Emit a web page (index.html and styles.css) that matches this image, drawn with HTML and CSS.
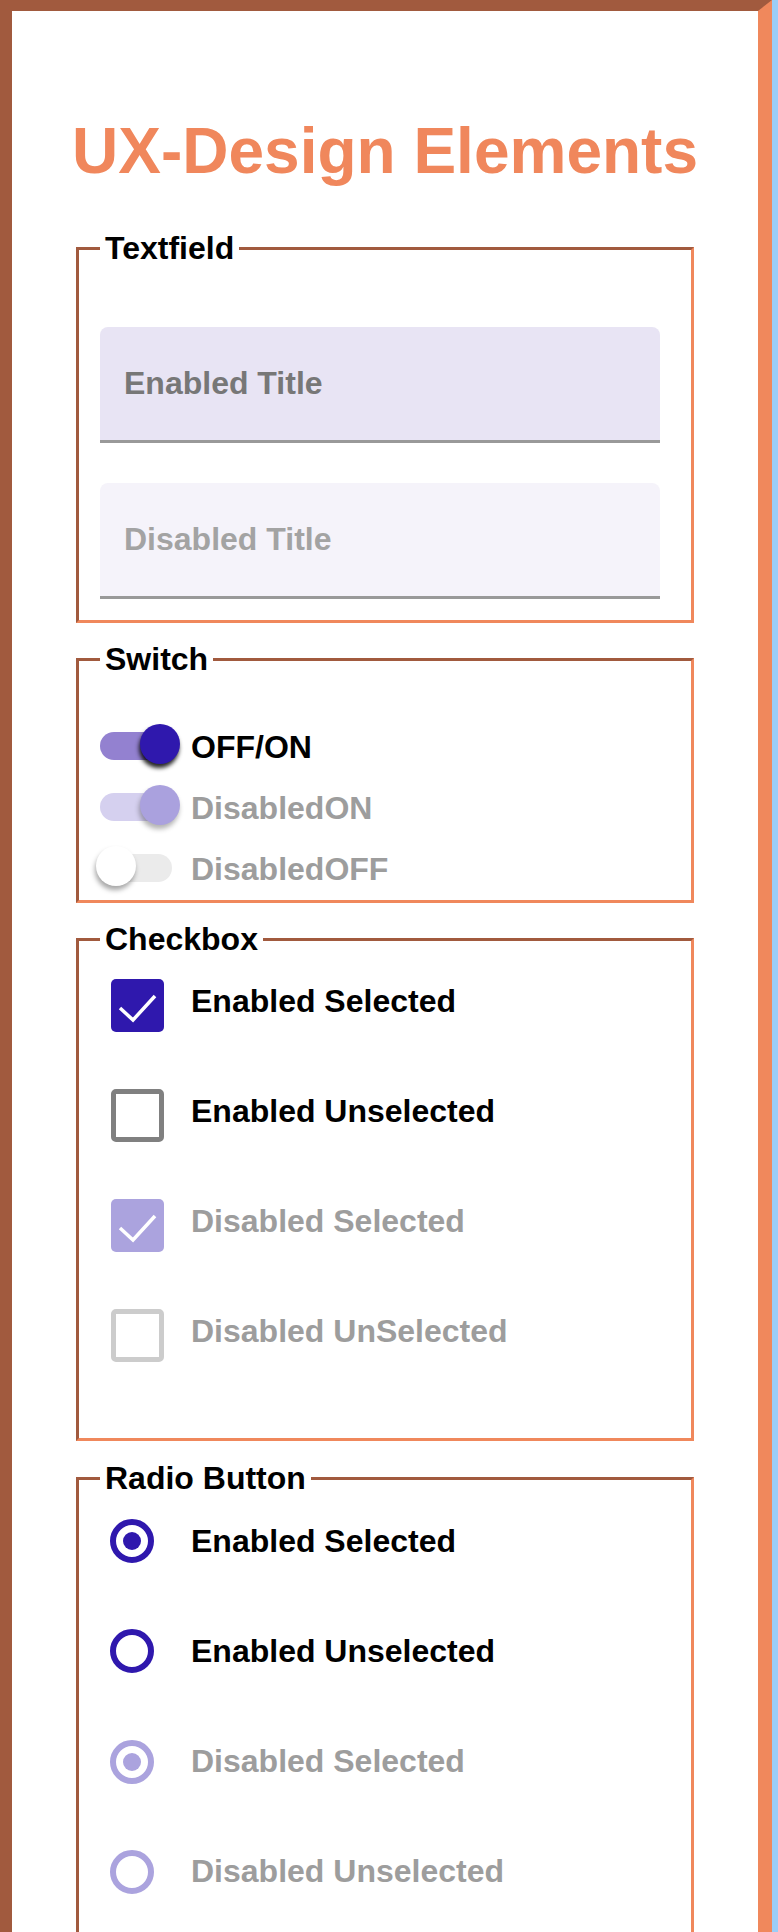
FILE: index.html
```html
<!DOCTYPE html>
<html lang="en">
<head>
<meta charset="utf-8">
<title>UX-Design Elements</title>
<link rel="stylesheet" href="styles.css">
</head>
<body>
<div class="page">
  <h1 class="title">UX-Design Elements</h1>

  <fieldset class="group group-text">
    <legend class="group-legend">Textfield</legend>
    <div class="field field-enabled">Enabled Title</div>
    <div class="field field-disabled">Disabled Title</div>
  </fieldset>

  <fieldset class="group group-switch">
    <legend class="group-legend">Switch</legend>
    <div class="switch-row">
      <span class="switch switch-on"><span class="track"></span><span class="thumb"></span></span>
      <span class="label">OFF/ON</span>
    </div>
    <div class="switch-row">
      <span class="switch switch-dis-on"><span class="track"></span><span class="thumb"></span></span>
      <span class="label label-dis">DisabledON</span>
    </div>
    <div class="switch-row">
      <span class="switch switch-dis-off"><span class="track"></span><span class="thumb"></span></span>
      <span class="label label-dis">DisabledOFF</span>
    </div>
  </fieldset>

  <fieldset class="group group-check">
    <legend class="group-legend">Checkbox</legend>
    <div class="check-row">
      <span class="box box-on"><svg viewBox="0 0 53 53" class="tick"><polyline points="9,29 22,41 44,17"/></svg></span>
      <span class="label">Enabled Selected</span>
    </div>
    <div class="check-row">
      <span class="box box-off"></span>
      <span class="label">Enabled Unselected</span>
    </div>
    <div class="check-row">
      <span class="box box-dis-on"><svg viewBox="0 0 53 53" class="tick"><polyline points="9,29 22,41 44,17"/></svg></span>
      <span class="label label-dis">Disabled Selected</span>
    </div>
    <div class="check-row">
      <span class="box box-dis-off"></span>
      <span class="label label-dis">Disabled UnSelected</span>
    </div>
  </fieldset>

  <fieldset class="group group-radio">
    <legend class="group-legend">Radio Button</legend>
    <div class="radio-row">
      <span class="radio radio-on"><span class="dot"></span></span>
      <span class="label">Enabled Selected</span>
    </div>
    <div class="radio-row">
      <span class="radio"></span>
      <span class="label">Enabled Unselected</span>
    </div>
    <div class="radio-row">
      <span class="radio radio-dis radio-on"><span class="dot"></span></span>
      <span class="label label-dis">Disabled Selected</span>
    </div>
    <div class="radio-row">
      <span class="radio radio-dis"></span>
      <span class="label label-dis">Disabled Unselected</span>
    </div>
  </fieldset>
</div>
</body>
</html>
```

FILE: styles.css
```css
html, body {
  margin: 0;
  padding: 0;
}

body {
  background: #9bcdf7;
  font-family: "Liberation Sans", Arial, Helvetica, sans-serif;
}

.page {
  box-sizing: border-box;
  width: 772px;
  min-height: 2100px;
  background: #ffffff;
  border-style: solid;
  border-width: 11px 14px 0 12px;
  border-color: #a15a3e #f0885c #f0885c #a15a3e;
  padding-bottom: 60px;
}

.title {
  margin: 103px 0 42px;
  font-size: 64px;
  font-weight: 700;
  line-height: normal;
  color: #f0875c;
  text-align: center;
}

.group {
  box-sizing: border-box;
  width: 618px;
  margin: 0 auto;
  border-style: solid;
  border-width: 3px;
  border-color: #a15a3e #f0885c #f0885c #a15a3e;
  padding: 0 31px 0 21px;
  min-width: 0;
}

.group-legend {
  padding: 0 5px;
  font-size: 32px;
  font-weight: 700;
  line-height: normal;
  color: #000;
}

.label {
  font-size: 32px;
  font-weight: 700;
  line-height: normal;
  color: #000;
  white-space: nowrap;
}

.label-dis {
  color: #9d9d9d;
}

/* Textfield */
.group-text {
  padding-top: 60px;
  padding-bottom: 21px;
}

.field {
  box-sizing: border-box;
  width: 560px;
  height: 116px;
  display: flex;
  align-items: center;
  padding-left: 24px;
  border-radius: 8px 8px 0 0;
  border-bottom: 3px solid #999999;
  font-size: 32px;
  font-weight: 700;
}

.field-enabled {
  background: #e8e4f4;
  color: #777777;
}

.field-disabled {
  margin-top: 40px;
  background: #f5f3fa;
  color: #a3a3a3;
}

/* Switch */
.group-switch {
  margin-top: 18px;
  padding-top: 39px;
  padding-bottom: 0;
}

.switch-row {
  height: 61px;
  display: flex;
  align-items: center;
}

.switch {
  display: grid;
  width: 84px;
  height: 44px;
  margin: 0 11px 4px -4px;
}

.track,
.thumb {
  grid-area: 1 / 1;
}

.track {
  width: 72px;
  height: 28px;
  margin-left: 4px;
  border-radius: 14px;
  align-self: center;
}

.thumb {
  width: 40px;
  height: 40px;
  border-radius: 50%;
  align-self: start;
}

.switch-on .track { background: #9381d0; }
.switch-on .thumb {
  justify-self: end;
  background: #2f18ad;
  box-shadow: -1px 4px 4px rgba(0, 0, 0, 0.85);
}

.switch-dis-on .track { background: #d5d0ef; }
.switch-dis-on .thumb {
  justify-self: end;
  background: #aaa1de;
  box-shadow: -1px 4px 5px rgba(0, 0, 0, 0.3);
}

.switch-dis-off .track { background: #ebebeb; }
.switch-dis-off .thumb {
  justify-self: start;
  background: #ffffff;
  box-shadow: -1px 4px 5px rgba(0, 0, 0, 0.35);
}

/* Checkbox */
.group-check {
  margin-top: 18px;
  padding-top: 21px;
  padding-bottom: 76px;
}

.check-row {
  display: flex;
  align-items: flex-start;
  height: 53px;
}

.check-row + .check-row {
  margin-top: 57px;
}

.check-row .label {
  margin-top: 4px;
}

.box {
  box-sizing: border-box;
  flex: none;
  width: 53px;
  height: 53px;
  margin: 0 27px 0 11px;
  border-radius: 5px;
  display: flex;
}

.box-on { background: #2f18ad; }
.box-dis-on { background: #aba3de; }
.box-off { border: 5px solid #808080; }
.box-dis-off { border: 5px solid #cccccc; }

.tick {
  width: 53px;
  height: 53px;
}

.tick polyline {
  fill: none;
  stroke: #ffffff;
  stroke-width: 3.5;
}

/* Radio */
.group-radio {
  margin-top: 19px;
  padding-top: 22px;
  padding-bottom: 40px;
}

.radio-row {
  display: flex;
  align-items: center;
  height: 44px;
}

.radio-row + .radio-row {
  margin-top: 66.3px;
}

.radio {
  box-sizing: border-box;
  flex: none;
  width: 44px;
  height: 44px;
  margin: 0 37px 0 10px;
  border-radius: 50%;
  border: 6px solid #2f18ad;
  display: flex;
  align-items: center;
  justify-content: center;
}

.radio-dis {
  border-color: #aba3de;
}

.dot {
  width: 18px;
  height: 18px;
  border-radius: 50%;
  background: #2f18ad;
}

.radio-dis .dot {
  background: #aba3de;
}
```
